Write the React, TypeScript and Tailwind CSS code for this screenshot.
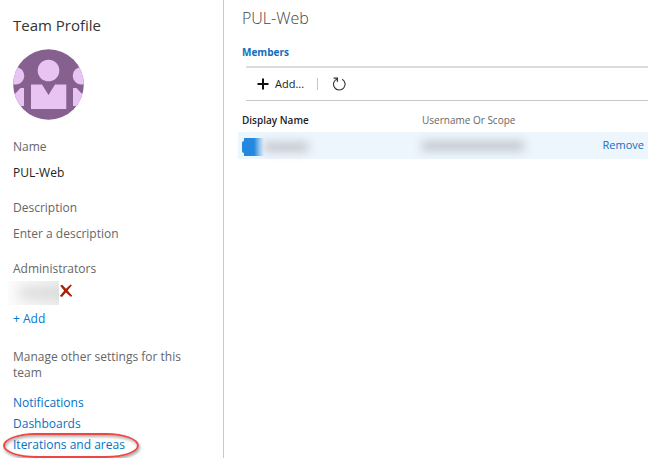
import React from 'react';

const settingsLinks = [
  { label: 'Notifications', href: '#notifications' },
  { label: 'Dashboards', href: '#dashboards' },
  { label: 'Iterations and areas', href: '#iterations', marked: true },
];

function TeamAvatar() {
  return (
    <svg viewBox="0 0 72 72" className="mt-[11px] size-[72px]" role="img" aria-label="Team picture">
      <defs>
        <clipPath id="avatar-circle">
          <circle cx="35.5" cy="36.5" r="35.3" />
        </clipPath>
      </defs>
      <g clipPath="url(#avatar-circle)">
        <rect width="72" height="72" fill="#86608e" />
        <g fill="#e8c4f3">
          <circle cx="35.5" cy="22.5" r="10.8" />
          <path d="M18 36.5H29L35.5 47L42 36.5H53.3V61H18Z" />
          <circle cx="2.5" cy="27.7" r="8.8" />
          <path d="M-10 40H-4L1 47L7.5 40H11V58H-10Z" />
          <circle cx="68.5" cy="27.7" r="8.8" />
          <path d="M60 40H63.5L70 47L75 40H82V58H60Z" />
        </g>
      </g>
    </svg>
  );
}

function RemoveIcon() {
  return (
    <svg viewBox="0 0 14 14" className="size-[14px]" aria-hidden="true">
      <path
        d="M1.2 1.8L3.2 .8L7 4.7L11.6 .6L12.9 1.2L8.6 6.4L13.4 12L11.8 12.8L6.9 8.5L3 13L.8 12L5.2 6.7Z"
        fill="#a82008"
      />
    </svg>
  );
}

function PlusIcon() {
  return (
    <svg viewBox="0 0 12 12" className="size-3" fill="none" stroke="#111" strokeWidth="2" aria-hidden="true">
      <path d="M6 .5V11.5M.5 6H11.5" />
    </svg>
  );
}

function RefreshIcon() {
  return (
    <svg viewBox="0 0 14 14" className="size-[14px]" fill="none" stroke="#333" strokeWidth="1.1" aria-hidden="true">
      <path d="M10.2 2.2A5.8 5.8 0 1 1 5 1.9" />
      <path d="M1.6 1.1H5.4V4.8" strokeWidth="1.3" />
    </svg>
  );
}

function Sidebar() {
  return (
    <aside className="w-56 shrink-0 border-r border-[#c8c8c8] px-[13px] pt-[13px] text-xs leading-5 text-[#666]">
      <h1 className="text-[15px] leading-6 text-[#333]">Team Profile</h1>
      <TeamAvatar />

      <h2 className="mt-[17px]">Name</h2>
      <p className="mt-1.5 text-[#222]">PUL-Web</p>

      <h2 className="mt-[15px]">Description</h2>
      <p className="mt-1.5">Enter a description</p>

      <h2 className="mt-[15px]">Administrators</h2>
      <div className="-ml-[5px] flex items-center pt-0.5">
        <span className="flex h-6 w-[51px] items-center overflow-hidden bg-linear-to-r from-[#fcfcfc] to-[#ededed]">
          <span className="ml-3 h-2 w-14 shrink-0 bg-[#d2d2d2] blur-[6px]" />
        </span>
        <button type="button" aria-label="Remove administrator" className="pb-1">
          <RemoveIcon />
        </button>
      </div>
      <button type="button" className="mt-1 block text-[#0078d4]">
        + Add
      </button>

      <p className="mt-5 leading-4">Manage other settings for this team</p>
      <nav aria-label="Team settings" className="mt-3 flex flex-col items-start gap-px text-[#0072c6]">
        {settingsLinks.map((link) => (
          <a key={link.label} href={link.href} className="relative">
            {link.label}
            {link.marked && (
              <span className="pointer-events-none absolute -top-0.5 -right-3.5 -bottom-[3px] -left-2.5 rounded-[24%/50%] border-2 border-[#ee4545] shadow-[1px_2px_3px_rgba(0,0,0,0.35),inset_1px_2px_3px_rgba(0,0,0,0.3)]" />
            )}
          </a>
        ))}
      </nav>
    </aside>
  );
}

function MembersTable() {
  return (
    <table className="mt-2 w-full table-fixed text-left text-[10px]">
      <thead>
        <tr className="h-[23px] text-[#666]">
          <th className="w-[184px] p-0 pl-1 font-semibold text-[#222]">Display Name</th>
          <th className="p-0 font-normal">Username Or Scope</th>
          <th className="w-20 p-0" aria-label="Actions" />
        </tr>
      </thead>
      <tbody>
        <tr className="h-[27px] bg-[#edf5fd]">
          <td className="p-0 pl-1">
            <span className="mt-0.5 flex h-[18px] items-center">
              <span className="h-3 w-0.5 rounded-l-full bg-[#2488d8]" />
              <span className="h-[18px] w-5 bg-linear-to-r from-[#2488e0] from-50% to-[#2488e0]/0" />
              <span className="h-2.5 w-11 bg-[#c3c8ce] blur-[5px]" />
            </span>
          </td>
          <td className="p-0">
            <span className="block h-2.5 w-[102px] bg-[#c3c8ce] blur-[5px]" />
          </td>
          <td className="p-0 pr-1 text-right">
            <button type="button" className="text-[11px] text-[#106ebe]">
              Remove
            </button>
          </td>
        </tr>
      </tbody>
    </table>
  );
}

export default function App() {
  return (
    <div className="flex min-h-screen bg-white font-['Open_Sans','Noto_Sans',sans-serif]">
      <Sidebar />
      <main className="min-w-0 flex-1 pl-3.5">
        <h2 className="mt-1.5 ml-1 text-base leading-6 font-light text-[#444]">PUL-Web</h2>
        <a href="#members" className="mt-3.5 ml-1 block text-[10px] leading-4 font-bold text-[#106ebe]">
          Members
        </a>
        <div className="mt-1.5 ml-2 flex h-[35px] items-center border-t-2 border-b border-t-[#dcdcdc] border-b-[#c8c8c8] pl-[11px] text-[11px] text-[#222]">
          <button type="button" className="flex items-center gap-1.5">
            <PlusIcon />
            Add...
          </button>
          <span className="ml-[13px] h-3 w-px bg-[#c8c8c8]" />
          <button type="button" aria-label="Refresh" className="ml-3.5">
            <RefreshIcon />
          </button>
        </div>
        <MembersTable />
      </main>
    </div>
  );
}
